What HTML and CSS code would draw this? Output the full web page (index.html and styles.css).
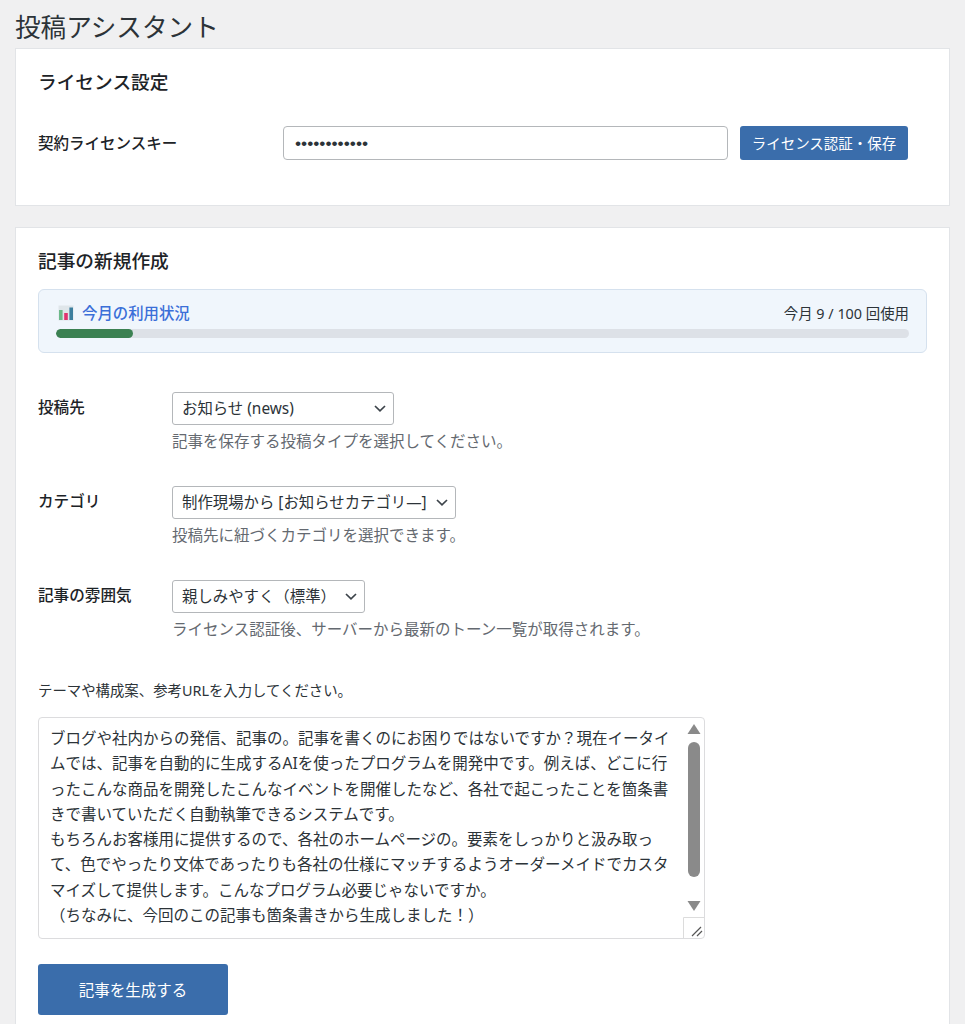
FILE: index.html
```html
<!DOCTYPE html>
<html lang="ja">
<head>
<meta charset="utf-8">
<title>投稿アシスタント</title>
<link rel="stylesheet" href="styles.css">
</head>
<body>
<div class="wrap">
  <h1 class="page-title">投稿アシスタント</h1>
  <section class="card card-license">
    <h2 class="card-title">ライセンス設定</h2>
    <div class="license-row">
      <label class="license-label">契約ライセンスキー</label>
      <input class="license-input" type="password" value="............">
      <button class="btn btn-small">ライセンス認証・保存</button>
    </div>
  </section>
  <section class="card card-new">
    <h2 class="card-title">記事の新規作成</h2>
    <div class="usage">
      <div class="usage-head">
        <div class="usage-title">
          <svg class="usage-icon" viewBox="0 0 16 16" width="16" height="16" aria-hidden="true">
            <rect x="0.5" y="0.5" width="15" height="15" fill="#dfe6ea"/>
            <rect x="1" y="5" width="3.6" height="10" fill="#6cb98a"/>
            <rect x="6.2" y="8" width="3.6" height="7" fill="#e0336f"/>
            <rect x="11.4" y="2.5" width="3.6" height="12.5" fill="#3d7f9e"/>
          </svg>
          <span>今月の利用状況</span>
        </div>
        <div class="usage-count">今月 9 / 100 回使用</div>
      </div>
      <div class="progress"><div class="progress-fill" style="width:9%"></div></div>
    </div>
    <div class="field">
      <label class="field-label">投稿先</label>
      <div class="field-body">
        <div class="select-wrap">
          <select class="select select-a"><option>お知らせ (news)</option></select>
          <svg class="chevron" viewBox="0 0 12 7" width="12" height="7" aria-hidden="true"><path d="M1 1l5 4.8L11 1" fill="none" stroke="#3c434a" stroke-width="1.7"/></svg>
        </div>
        <p class="desc">記事を保存する投稿タイプを選択してください。</p>
      </div>
    </div>
    <div class="field">
      <label class="field-label">カテゴリ</label>
      <div class="field-body">
        <div class="select-wrap">
          <select class="select select-b"><option>制作現場から [お知らせカテゴリ—]</option></select>
          <svg class="chevron" viewBox="0 0 12 7" width="12" height="7" aria-hidden="true"><path d="M1 1l5 4.8L11 1" fill="none" stroke="#3c434a" stroke-width="1.7"/></svg>
        </div>
        <p class="desc">投稿先に紐づくカテゴリを選択できます。</p>
      </div>
    </div>
    <div class="field">
      <label class="field-label">記事の雰囲気</label>
      <div class="field-body">
        <div class="select-wrap">
          <select class="select select-c"><option>親しみやすく（標準）</option></select>
          <svg class="chevron" viewBox="0 0 12 7" width="12" height="7" aria-hidden="true"><path d="M1 1l5 4.8L11 1" fill="none" stroke="#3c434a" stroke-width="1.7"/></svg>
        </div>
        <p class="desc">ライセンス認証後、サーバーから最新のトーン一覧が取得されます。</p>
      </div>
    </div>
    <p class="prompt-label">テーマや構成案、参考URLを入力してください。</p>
    <div class="text-wrap">
      <textarea class="text" rows="7">ブログや社内からの発信、記事の。記事を書くのにお困りではないですか？現在イータイムでは、記事を自動的に生成するAIを使ったプログラムを開発中です。例えば、どこに行ったこんな商品を開発したこんなイベントを開催したなど、各社で起こったことを箇条書きで書いていただく自動執筆できるシステムです。
もちろんお客様用に提供するので、各社のホームページの。要素をしっかりと汲み取って、色でやったり文体であったりも各社の仕様にマッチするようオーダーメイドでカスタマイズして提供します。こんなプログラム必要じゃないですか。
（ちなみに、今回のこの記事も箇条書きから生成しました！）</textarea>
      <svg class="scrollbar" viewBox="0 0 20 221" width="20" height="221" aria-hidden="true">
        <path d="M10 7l6.5 10h-13z" fill="#8a8a8a"/>
        <rect x="4" y="25" width="12" height="135" rx="6" fill="#8a8a8a"/>
        <path d="M10 194l6.5-10h-13z" fill="#8a8a8a"/>
      </svg>
      <svg class="resizer" viewBox="0 0 21 21" width="21" height="21" aria-hidden="true">
        <path d="M.5 21V.5H21" fill="none" stroke="#dcdcdc"/>
        <path d="M9 19 18 10M14 19l5-5" stroke="#555" stroke-width="1.2" fill="none"/>
      </svg>
    </div>
    <button class="btn btn-large">記事を生成する</button>
  </section>
</div>
</body>
</html>
```
FILE: styles.css
```css
html, body {
  margin: 0;
  height: 1024px;
  overflow: hidden;
  background: #f0f0f1;
}
body {
  font-family: "Noto Sans", "Noto Sans CJK JP", sans-serif;
  color: #2c3338;
}
.wrap {
  padding: 0 15px;
}
.page-title {
  margin: 0;
  height: 48px;
  font-size: 25.6px;
  line-height: 56px;
  font-weight: 400;
  color: #2c3338;
}
.card {
  box-sizing: border-box;
  background: #fff;
  border: 1px solid #e2e4e7;
  padding: 0 22px;
}
.card-license {
  height: 158px;
  margin-bottom: 21px;
}
.card-new {
  height: 900px;
}
.card-title {
  margin: 0;
  padding-top: 19px;
  font-size: 18.7px;
  line-height: 28px;
  font-weight: 500;
  color: #1d2327;
}
.license-row {
  display: flex;
  align-items: center;
  margin-top: 30px;
}
.license-label {
  width: 245px;
  font-size: 15.5px;
  font-weight: 500;
  color: #1d2327;
  position: relative;
  top: -1px;
}
.license-input {
  box-sizing: border-box;
  width: 445px;
  height: 34px;
  margin: 0 12px 0 0;
  padding: 0 11px;
  border: 1px solid #b4b7ba;
  border-radius: 4px;
  font-size: 17.4px;
  color: #2c3338;
  background: #fff;
}
.btn {
  border: 0;
  border-radius: 3px;
  background: #3a6dab;
  color: #fff;
  font-family: inherit;
  padding: 0;
}
.btn-small {
  width: 168px;
  height: 34px;
  padding-bottom: 1px;
  font-size: 14.5px;
}
.btn-large {
  display: block;
  width: 190px;
  height: 51px;
  margin-top: 25px;
  font-size: 15.5px;
}
.usage {
  box-sizing: border-box;
  height: 64px;
  margin-top: 14px;
  padding: 10px 17px 0;
  background: #f0f6fc;
  border: 1px solid #d5e1ee;
  border-radius: 6px;
}
.usage-head {
  display: flex;
  justify-content: space-between;
  align-items: center;
  height: 25px;
}
.usage-title {
  display: flex;
  align-items: center;
  gap: 8px;
  margin-left: 2px;
  font-size: 15.4px;
  font-weight: 500;
  color: #3b6fd8;
}
.usage-count {
  font-size: 14.4px;
  color: #2c3338;
}
.progress {
  height: 9px;
  margin-top: 4px;
  background: #dde1e7;
  border-radius: 5px;
  overflow: hidden;
}
.progress-fill {
  height: 100%;
  background: #3b8152;
  border-radius: 5px;
}
.field {
  display: flex;
  margin-top: 39px;
}
.field + .field {
  margin-top: 34px;
}
.field-label {
  width: 134px;
  font-size: 15.6px;
  line-height: 30px;
  font-weight: 500;
  color: #1d2327;
}
.select-wrap {
  position: relative;
  width: max-content;
}
.select {
  display: block;
  box-sizing: border-box;
  height: 33px;
  padding: 0 0 0 9px;
  border: 1px solid #b4b7ba;
  border-radius: 3px;
  background: #fff;
  appearance: none;
  font-family: inherit;
  font-size: 15.4px;
  color: #2c3338;
}
.select-a { width: 222px; }
.select-b { width: 284px; }
.select-c { width: 193px; }
.chevron {
  position: absolute;
  right: 8px;
  top: 13px;
  pointer-events: none;
}
.desc {
  margin: 5px 0 0;
  font-size: 15.5px;
  line-height: 22px;
  color: #646970;
}
.prompt-label {
  margin: 41px 0 0;
  font-size: 14.4px;
  line-height: 20px;
  color: #2c3338;
}
.text-wrap {
  position: relative;
  width: 667px;
  height: 222px;
  margin-top: 16px;
}
.text {
  display: block;
  box-sizing: border-box;
  width: 100%;
  height: 100%;
  padding: 8px 30px 0 11px;
  border: 1px solid #dcdcde;
  border-radius: 4px;
  background: #fff;
  font-family: inherit;
  font-size: 15.5px;
  line-height: 25.3px;
  color: #2c3338;
  overflow: hidden;
  resize: none;
}
.scrollbar {
  position: absolute;
  right: 1px;
  top: 0;
}
.resizer {
  position: absolute;
  right: 1px;
  bottom: 1px;
}
```
